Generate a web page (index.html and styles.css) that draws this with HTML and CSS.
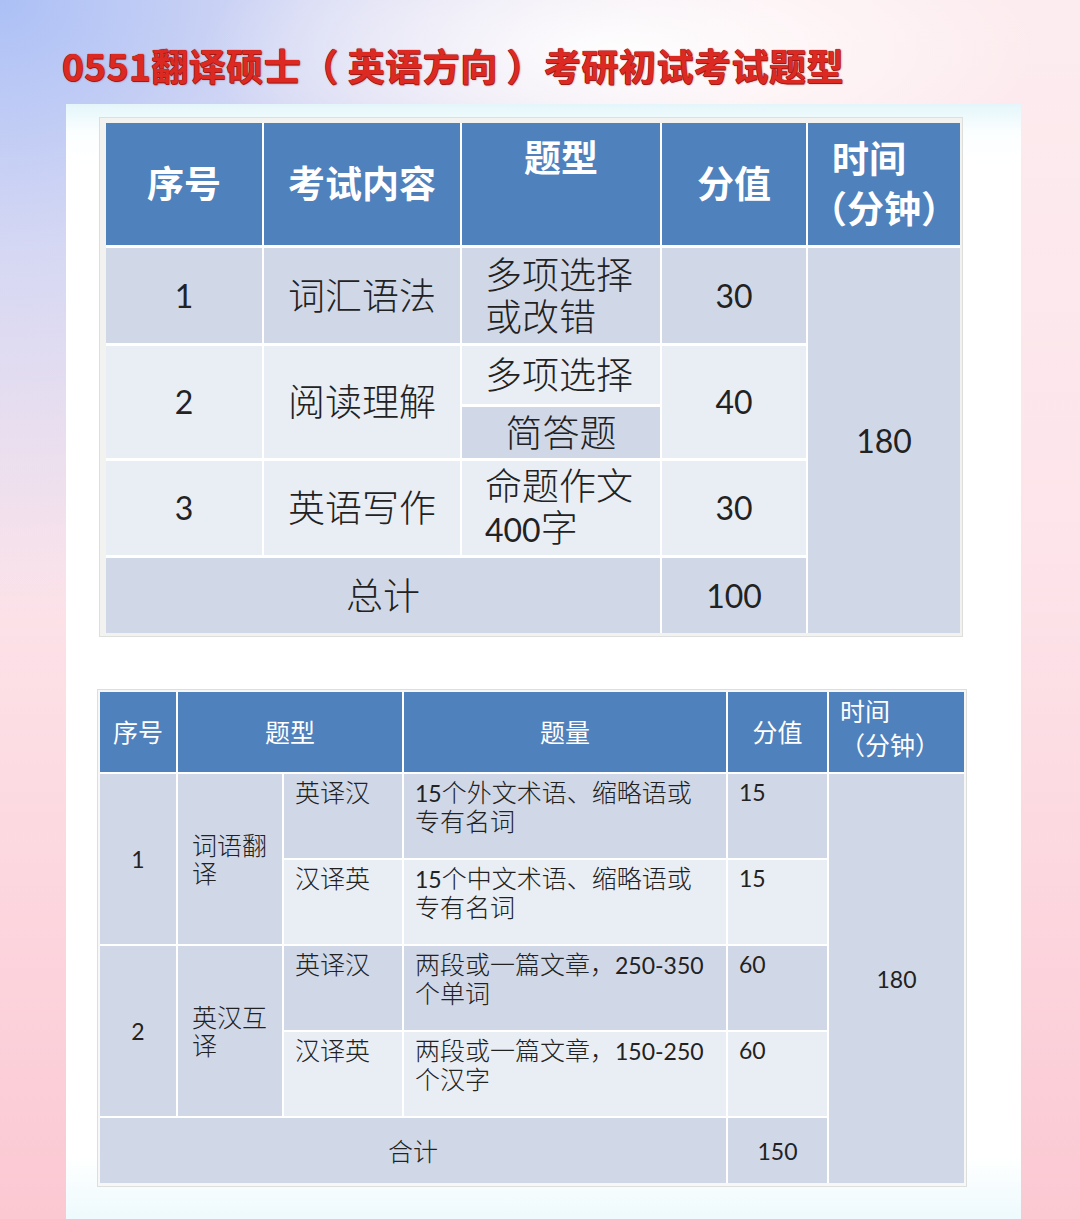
FILE: index.html
```html
<!DOCTYPE html>
<html lang="zh-CN">
<head>
<meta charset="utf-8">
<title>0551翻译硕士（英语方向）考研初试考试题型</title>
<link rel="stylesheet" href="styles.css">
</head>
<body>
  <h1 class="title">0551翻译硕士（ 英语方向 ）考研初试考试题型</h1>
  <div class="panel">
    <div class="frame frame1">
      <div class="t1">
        <div class="c h">序号</div>
        <div class="c h">考试内容</div>
        <div class="c h top">题型</div>
        <div class="c h">分值</div>
        <div class="c h col">
          <span class="shift">时间</span>
          <span>（分钟）</span>
        </div>

        <div class="c d"><span class="n1">1</span></div>
        <div class="c d">词汇语法</div>
        <div class="c d left"><span>多项选择<br>或改错</span></div>
        <div class="c d"><span class="n1">30</span></div>
        <div class="c d r5"><span class="n1">180</span></div>

        <div class="c l r2"><span class="n1">2</span></div>
        <div class="c l r2">阅读理解</div>
        <div class="c l left">多项选择</div>
        <div class="c l r2"><span class="n1">40</span></div>
        <div class="c d">简答题</div>

        <div class="c l"><span class="n1">3</span></div>
        <div class="c l">英语写作</div>
        <div class="c l left"><span>命题作文<br><span class="n1">400</span>字</span></div>
        <div class="c l"><span class="n1">30</span></div>

        <div class="c d cs3">总计</div>
        <div class="c d"><span class="n1">100</span></div>
      </div>
    </div>

    <div class="frame frame2">
      <div class="t2">
        <div class="c h">序号</div>
        <div class="c h cs2">题型</div>
        <div class="c h">题量</div>
        <div class="c h">分值</div>
        <div class="c h tlh"><span>时间<br>（分钟）</span></div>

        <div class="c d r2"><span class="n2">1</span></div>
        <div class="c d r2 ml"><span>词语翻<br>译</span></div>
        <div class="c d tl">英译汉</div>
        <div class="c d tl"><span><span class="n2">15</span>个外文术语、缩略语或<br>专有名词</span></div>
        <div class="c d tl"><span class="n2">15</span></div>
        <div class="c d r5"><span class="n2">180</span></div>

        <div class="c l tl">汉译英</div>
        <div class="c l tl"><span><span class="n2">15</span>个中文术语、缩略语或<br>专有名词</span></div>
        <div class="c l tl"><span class="n2">15</span></div>

        <div class="c d r2"><span class="n2">2</span></div>
        <div class="c d r2 ml"><span>英汉互<br>译</span></div>
        <div class="c d tl">英译汉</div>
        <div class="c d tl"><span>两段或一篇文章，<span class="n2">250-350</span><br>个单词</span></div>
        <div class="c d tl"><span class="n2">60</span></div>

        <div class="c l tl">汉译英</div>
        <div class="c l tl"><span>两段或一篇文章，<span class="n2">150-250</span><br>个汉字</span></div>
        <div class="c l tl"><span class="n2">60</span></div>

        <div class="c d cs4">合计</div>
        <div class="c d"><span class="n2">150</span></div>
      </div>
    </div>
  </div>
</body>
</html>
```
FILE: styles.css
```css
html, body {
  margin: 0;
  padding: 0;
  height: 1219px;
  overflow: hidden;
}

body {
  width: 1080px;
  font-family: Lato, "Noto Sans CJK SC", sans-serif;
  color: #222;
  background:
    radial-gradient(ellipse 420px 140px at 620px 50px, rgba(255,255,255,0.95) 0%, rgba(255,255,255,0) 100%),
    radial-gradient(ellipse 760px 620px at 0 0, rgba(172,192,246,1) 0%, rgba(196,208,246,0.7) 40%, rgba(230,232,250,0) 100%),
    linear-gradient(180deg, #fcecef 0%, #fde4ea 45%, #fcd3dc 80%, #fbc8d2 100%);
}

.title {
  margin: 0;
  padding: 46px 0 0 62px;
  height: 38px;
  font-family: "Noto Sans CJK SC", sans-serif;
  font-size: 37px;
  line-height: 38px;
  font-weight: 700;
  letter-spacing: 0.5px;
  color: #dc2a22;
  white-space: nowrap;
  text-shadow:
    0 0 1px #8e1414,
    0.5px 0.5px 0 #a51a1a,
    -0.5px -0.5px 0 #a51a1a,
    1px 1px 2px rgba(130, 10, 10, 0.45);
}

.panel {
  margin: 20px 0 0 66px;
  width: 955px;
  height: 1115px;
  box-sizing: border-box;
  padding: 13px 0 0 33px;
  overflow: hidden;
  background: linear-gradient(180deg, #e4f6fa 0px, #fbfeff 28px, #ffffff 60px, #ffffff 1050px, #eefafd 1115px);
}

.frame {
  width: fit-content;
  border: 1px solid #dcdfdb;
  background: #f2f3f1;
}

.frame1 {
  padding: 5px 2px 3px 6px;
}

.frame2 {
  margin: 52px 0 0 -2px;
  padding: 2px 2px 3px 2px;
  background: #f6f7f6;
}

.t1, .t2 {
  display: grid;
  background: #ffffff;
  font-weight: 300;
}

.t1 {
  grid-template-columns: 156px 196px 198px 144px 152px;
  grid-template-rows: 122px 95px 58px 51px 94px 75px;
  gap: 3px 2px;
  font-size: 37px;
  line-height: 42px;
}

.t2 {
  grid-template-columns: 76px 104px 118px 322px 99px 135px;
  grid-template-rows: 80px 84px 84px 84px 84px 65px;
  gap: 2px;
  font-size: 25px;
  line-height: 28px;
}

.c {
  display: flex;
  align-items: center;
  justify-content: center;
  text-align: center;
  white-space: nowrap;
  box-sizing: border-box;
}

.h {
  background: #4f81bd;
  color: #ffffff;
}

.t1 .h {
  font-weight: 700;
  line-height: 50px;
}

.t2 .h {
  font-weight: 400;
}

.d { background: #d0d8e8; }
.l { background: #e9edf4; }

.r2 { grid-row: span 2; }
.r5 { grid-row: span 5; }
.cs2 { grid-column: span 2; }
.cs3 { grid-column: span 3; }
.cs4 { grid-column: span 4; }

.top {
  align-items: flex-start;
  padding-top: 10px;
}

.col {
  flex-direction: column;
}

.shift {
  padding-right: 30px;
}

.left {
  justify-content: flex-start;
  text-align: left;
  padding-left: 23px;
}

.n1 {
  font-family: Lato, sans-serif;
  font-size: 32px;
  font-weight: 400;
}

.n2 {
  font-family: Lato, sans-serif;
  font-size: 23px;
  font-weight: 400;
}

.tl {
  align-items: flex-start;
  justify-content: flex-start;
  text-align: left;
  padding: 4px 0 0 11px;
}

.ml {
  justify-content: flex-start;
  text-align: left;
  padding-left: 14px;
}

.tlh {
  align-items: flex-start;
  justify-content: flex-start;
  text-align: left;
  padding: 2px 0 0 11px;
  line-height: 34px;
}
```
